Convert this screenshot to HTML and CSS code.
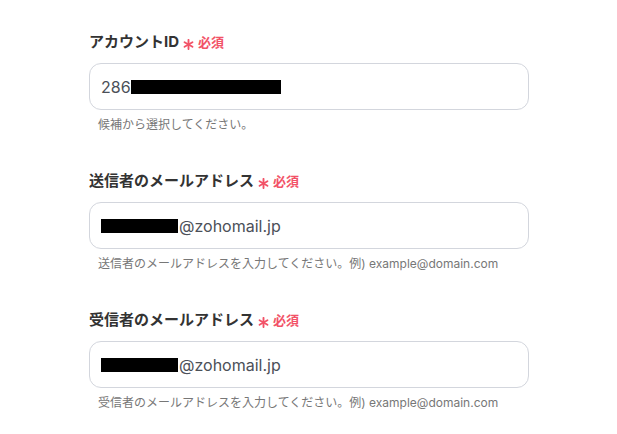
FILE: index.html
```html
<!DOCTYPE html>
<html lang="ja">
<head>
<meta charset="utf-8">
<link rel="stylesheet" href="styles.css">
</head>
<body>
<div class="form">
  <div class="field">
    <div class="label">アカウントID<span class="req"><svg class="ast" viewBox="0 0 10 10" width="11" height="11"><g stroke="#f25267" stroke-width="1.7" stroke-linecap="round"><line x1="5" y1="0.8" x2="5" y2="9.2"/><line x1="1.4" y1="2.9" x2="8.6" y2="7.1"/><line x1="1.4" y1="7.1" x2="8.6" y2="2.9"/></g></svg>必須</span></div>
    <div class="input"><span class="val">286</span><span class="mask mask-long"></span></div>
    <div class="hint">候補から選択してください。</div>
  </div>
  <div class="field">
    <div class="label">送信者のメールアドレス<span class="req"><svg class="ast" viewBox="0 0 10 10" width="11" height="11"><g stroke="#f25267" stroke-width="1.7" stroke-linecap="round"><line x1="5" y1="0.8" x2="5" y2="9.2"/><line x1="1.4" y1="2.9" x2="8.6" y2="7.1"/><line x1="1.4" y1="7.1" x2="8.6" y2="2.9"/></g></svg>必須</span></div>
    <div class="input"><span class="mask mask-short"></span><span class="val">@zohomail.jp</span></div>
    <div class="hint">送信者のメールアドレスを入力してください。例) example@domain.com</div>
  </div>
  <div class="field">
    <div class="label">受信者のメールアドレス<span class="req"><svg class="ast" viewBox="0 0 10 10" width="11" height="11"><g stroke="#f25267" stroke-width="1.7" stroke-linecap="round"><line x1="5" y1="0.8" x2="5" y2="9.2"/><line x1="1.4" y1="2.9" x2="8.6" y2="7.1"/><line x1="1.4" y1="7.1" x2="8.6" y2="2.9"/></g></svg>必須</span></div>
    <div class="input"><span class="mask mask-short"></span><span class="val">@zohomail.jp</span></div>
    <div class="hint">受信者のメールアドレスを入力してください。例) example@domain.com</div>
  </div>
</div>
</body>
</html>
```

FILE: styles.css
```css
* { box-sizing: border-box; }
body {
  margin: 0;
  background: #ffffff;
  font-family: "Inter", "Noto Sans CJK JP", sans-serif;
}
.form {
  padding: 32px 0 0 89px;
  display: flex;
  flex-direction: column;
  gap: 38px;
}
.field {
  display: flex;
  flex-direction: column;
  width: 440px;
}
.label {
  font-size: 15px;
  line-height: 20px;
  font-weight: 700;
  color: #333333;
  display: flex;
  align-items: center;
}
.req {
  display: inline-flex;
  align-items: center;
  color: #f25267;
  font-size: 13px;
  font-weight: 700;
  margin-left: 3px;
}
.ast {
  margin-left: 1px;
  margin-right: 4px;
  margin-top: 5px;
}
.input {
  margin-top: 11px;
  height: 47px;
  border: 1px solid #d3d6dd;
  border-radius: 12px;
  display: flex;
  align-items: center;
  padding-left: 11px;
  font-size: 16px;
  color: #4b5058;
}
.mask {
  display: inline-block;
  height: 14px;
  background: #000;
}
.mask-long { width: 150px; margin-left: 0; }
.mask-short { width: 77px; margin-right: 1px; }
.hint {
  margin-top: 7px;
  padding-left: 9px;
  font-size: 12px;
  line-height: 16px;
  color: #777777;
}
```
